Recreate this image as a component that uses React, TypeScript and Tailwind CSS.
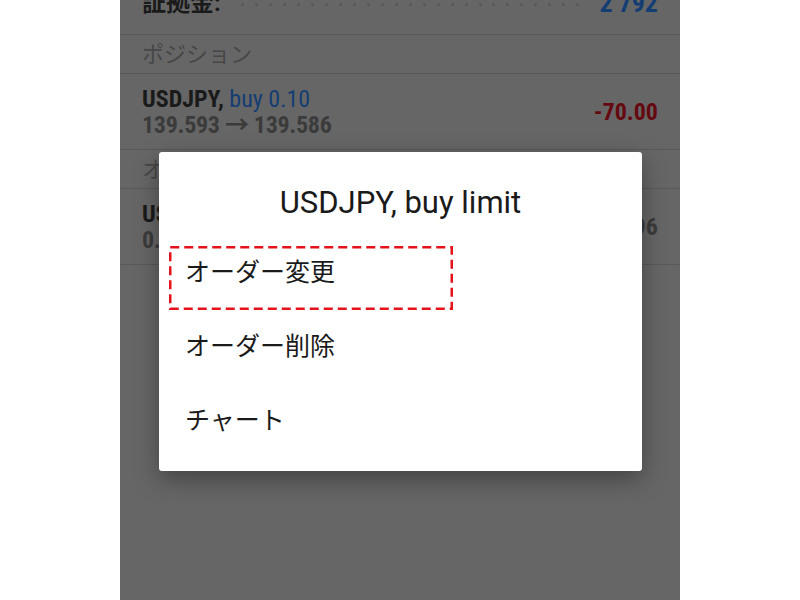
import React from "react";

const cond = { fontFamily: '"Roboto Condensed", "Liberation Sans Narrow", Roboto, "Noto Sans CJK JP", sans-serif' };
const jp = { fontFamily: 'Roboto, "Noto Sans CJK JP", sans-serif' };

const menuItems = ["オーダー変更", "オーダー削除", "チャート"];

function Dots() {
    return (
        <div className="flex-1 mx-[20px] mt-[2px] h-[3px] flex justify-between overflow-hidden">
            {Array.from({ length: 25 }).map((_, i) => (
                <span key={i} className="w-[3px] h-[3px] rounded-full bg-[#585858] shrink-0" />
            ))}
        </div>
    );
}

function SectionHeader({ label }: { label: string }) {
    return (
        <div className="h-[39px] border-b border-[#595959] flex items-center pl-[22px] text-[22px] text-[#474747]" style={jp}>
            {label}
        </div>
    );
}

function TradeRow({ symbol, side, sideColor, sub, value, valueColor }: {
    symbol: string;
    side: string;
    sideColor: string;
    sub: string;
    value: string;
    valueColor: string;
}) {
    return (
        <div className="h-[76px] border-b border-[#595959] flex items-center justify-between px-[22px]" style={cond}>
            <div className="flex flex-col leading-[26px]">
                <div className="text-[24px] font-bold text-[#1a1a1a]">
                    {symbol} <span className={`font-normal ${sideColor}`}>{side}</span>
                </div>
                <div className="text-[24px] font-bold text-[#3b3b3b] tracking-[-0.3px]">{sub}</div>
            </div>
            <div className={`text-[24px] font-bold ${valueColor}`}>{value}</div>
        </div>
    );
}

export default function App() {
    return (
        <div className="w-[800px] h-[600px] bg-white flex justify-center">
            <div className="relative w-[560px] h-[600px] bg-[#666666] overflow-hidden">
                {/* dimmed list behind the dialog */}
                <div className="flex flex-col">
                    <div className="h-[35px] border-b border-[#595959] flex items-start px-[22px]">
                        <div className="-mt-[9px] flex items-center w-full leading-[24px]">
                            <span className="text-[24px] font-bold text-[#1a1a1a]" style={jp}>証拠金:</span>
                            <Dots />
                            <span className="text-[26px] font-bold text-[#143d73]" style={cond}>2 792</span>
                        </div>
                    </div>
                    <SectionHeader label="ポジション" />
                    <TradeRow
                        symbol="USDJPY,"
                        side="buy 0.10"
                        sideColor="text-[#143d73]"
                        sub="139.593 → 139.586"
                        value="-70.00"
                        valueColor="text-[#650911]"
                    />
                    <SectionHeader label="オーダー" />
                    <TradeRow
                        symbol="USDJPY,"
                        side="buy limit 0.10"
                        sideColor="text-[#143d73]"
                        sub="0.00 / 0.00"
                        value="139.496"
                        valueColor="text-[#3b3b3b]"
                    />
                </div>

                {/* dialog */}
                <div className="absolute left-[39px] top-[152px] w-[483px] h-[319px] bg-white rounded-[3px] shadow-[0_8px_24px_rgba(0,0,0,0.35)]" style={jp}>
                    <div className="pt-[29px] pb-[11px] text-center text-[31px] leading-[44px] text-[#1a1a1a]">
                        USDJPY, buy limit
                    </div>
                    {menuItems.map((label) => (
                        <div key={label} className="h-[74px] flex items-center pl-[26px] text-[25px] text-[#1a1a1a]">
                            {label}
                        </div>
                    ))}
                    {/* highlight annotation */}
                    <svg className="absolute left-[10px] top-[94px]" width="284" height="64" viewBox="0 0 284 64">
                        <rect x="1.25" y="1.25" width="281.5" height="61.5" fill="none" stroke="#e3121b" strokeWidth="2.5" strokeDasharray="9 5" />
                    </svg>
                </div>
            </div>
        </div>
    );
}
